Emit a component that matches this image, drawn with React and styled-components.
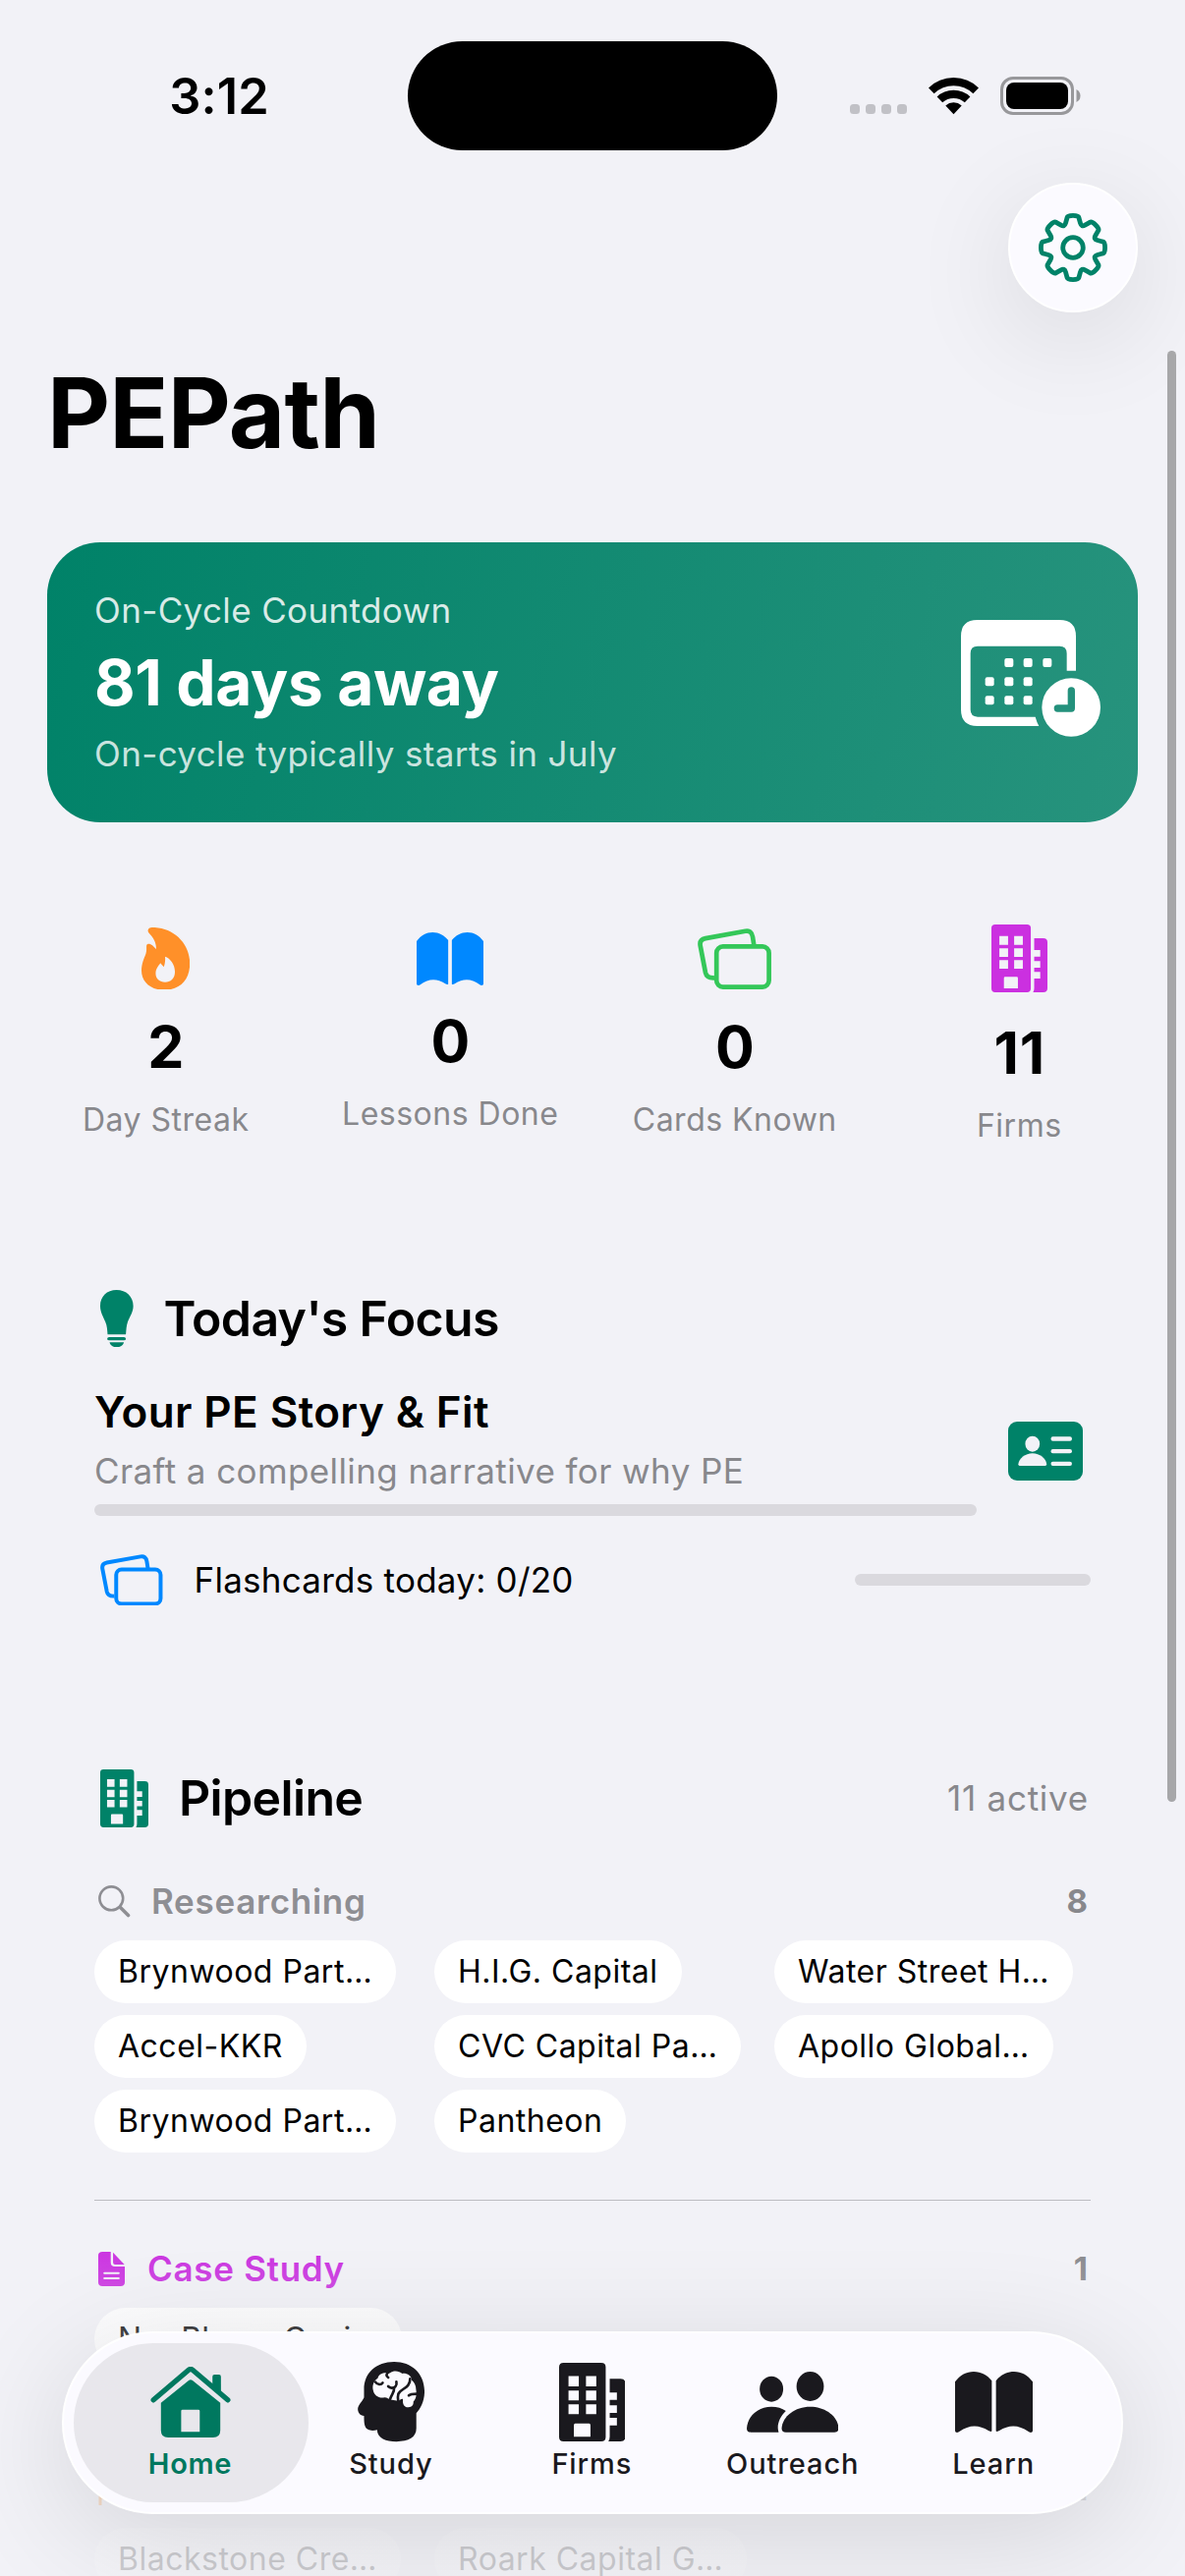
import React from 'react';
import styled, { createGlobalStyle } from 'styled-components';

const brand = '#008268';
const grey = '#88888c';
const pageBg = '#f2f2f7';

const GlobalStyle = createGlobalStyle`
  * {
    box-sizing: border-box;
  }
  body {
    margin: 0;
    background: ${pageBg};
    font-family: Inter, "Liberation Sans", sans-serif;
    color: #000;
  }
  svg {
    display: block;
    flex: none;
  }
`;

const Screen = styled.div`
  position: relative;
  width: 1206px;
  height: 2622px;
  overflow: hidden;
  background: ${pageBg};
`;

const StatusBar = styled.div`
  display: grid;
  grid-template-columns: 415px 376px 1fr;
  align-items: center;
  height: 153px;
  padding-top: 42px;
`;

const Clock = styled.div`
  padding-left: 31px;
  text-align: center;
  font-size: 50.5px;
  font-weight: 600;
  letter-spacing: 0.1px;
`;

const Island = styled.div`
  height: 111px;
  border-radius: 56px;
  background: #000;
`;

const Signals = styled.div`
  display: flex;
  align-items: center;
  gap: 22px;
  padding-left: 74px;
`;

const Dots = styled.div`
  display: flex;
  gap: 6px;
  margin-top: 27px;

  i {
    width: 10px;
    height: 10px;
    border-radius: 3.5px;
    background: #c1c1c6;
  }
`;

const Toolbar = styled.div`
  display: flex;
  justify-content: flex-end;
  padding: 33px 48px 0;
`;

const RoundButton = styled.button`
  display: flex;
  align-items: center;
  justify-content: center;
  width: 132px;
  height: 132px;
  padding: 0;
  border: 2px solid #fff;
  border-radius: 50%;
  background: #fbfaff;
  box-shadow: 0 24px 110px rgba(0, 0, 0, 0.11);
`;

const Title = styled.h1`
  margin: 42px 0 0 48px;
  font-size: 99px;
  line-height: 120px;
  font-weight: 700;
  letter-spacing: -0.8px;
`;

const Countdown = styled.section`
  display: flex;
  align-items: center;
  justify-content: space-between;
  height: 285px;
  margin: 72px 48px 0;
  padding: 0 38px 0 48px;
  border-radius: 54px;
  background: linear-gradient(104.4deg, #008268, #27937d);
  color: #fff;
`;

const CountdownText = styled.div`
  padding-bottom: 2px;
`;

const CountdownIcon = styled.div`
  padding-bottom: 8px;
`;

const CountdownNote = styled.p`
  margin: 0;
  font-size: 35px;
  line-height: 48px;
  letter-spacing: 0.37px;
  color: rgba(255, 255, 255, ${props => props.$alpha});
`;

const CountdownDays = styled.p`
  margin: 11px 0 9px;
  font-size: 64px;
  line-height: 78px;
  font-weight: 700;
  letter-spacing: -0.4px;
`;

const Stats = styled.section`
  display: grid;
  grid-template-columns: repeat(4, 1fr);
  gap: 48px;
  align-items: center;
  height: 240px;
  margin: 93px 48px 0;
`;

const Stat = styled.div`
  display: flex;
  flex-direction: column;
  align-items: center;
`;

const StatIcon = styled.div`
  display: flex;
  align-items: center;
  height: ${props => props.$height}px;
`;

const StatValue = styled.div`
  margin: 20px 0 18px;
  padding-left: 1px;
  font-size: 59px;
  line-height: 72px;
  font-weight: 700;
  letter-spacing: 0.8px;
`;

const StatLabel = styled.div`
  font-size: 32px;
  line-height: 39px;
  letter-spacing: 0.5px;
  white-space: nowrap;
  color: ${grey};
`;

const Section = styled.section`
  margin: ${props => props.$top}px 96px 0;
`;

const SectionHead = styled.div`
  display: flex;
  align-items: center;
  gap: 31px;
  height: 60px;
  padding: 0 2px 0 6px;
`;

const SectionTitle = styled.h2`
  flex: 1;
  margin: 0;
  font-size: 50px;
  line-height: 60px;
  font-weight: 600;
  letter-spacing: -0.65px;
`;

const Note = styled.div`
  font-size: 35px;
  line-height: 44px;
  letter-spacing: 0.4px;
  color: ${grey};
`;

const ActiveCount = styled(Note)`
  letter-spacing: 0.75px;
`;

const Lesson = styled.div`
  display: flex;
  align-items: center;
  justify-content: space-between;
  margin-top: 38px;
  padding-right: 8px;
`;

const LessonText = styled.div`
  width: 898px;
`;

const LessonTitle = styled.h3`
  margin: 0 0 11px;
  font-size: 44px;
  line-height: 54px;
  font-weight: 600;
  letter-spacing: 0.4px;
`;

const Track = styled.div`
  width: ${props => props.$width || '100%'};
  height: 12px;
  border-radius: 6px;
  background: #dad9de;
`;

const LessonTrack = styled(Track)`
  margin-top: 12px;
`;

const Flashcards = styled.div`
  display: flex;
  align-items: center;
  gap: 32px;
  height: 54px;
  margin-top: 38px;
  padding-left: 6px;
`;

const FlashcardsLabel = styled.div`
  flex: 1;
  font-size: 35px;
  line-height: 54px;
  letter-spacing: 0.25px;
`;

const Stage = styled.div`
  margin-top: ${props => props.$top}px;
`;

const StageHead = styled.div`
  display: flex;
  align-items: center;
  justify-content: space-between;
  height: 44px;
  padding: 0 3px 0 4px;
  margin-bottom: 18px;
`;

const StageName = styled.div`
  display: flex;
  align-items: center;
  gap: ${props => props.$gap || 23}px;
  font-size: 35px;
  line-height: 44px;
  font-weight: 600;
  letter-spacing: 0.7px;
  color: ${props => props.$color};
`;

const StageCount = styled.div`
  font-size: 33px;
  font-weight: 700;
  color: ${grey};
`;

const Chips = styled.div`
  display: grid;
  grid-template-columns: repeat(3, 322px);
  justify-items: start;
  gap: 12px 24px;
`;

const Chip = styled.div`
  height: 64px;
  padding: 0 24px;
  border-radius: 32px;
  background: #fff;
  font-size: 32px;
  line-height: 63px;
  letter-spacing: ${props => (props.$tight ? 0 : 0.5)}px;
  white-space: nowrap;
`;

const Divider = styled.div`
  height: 1px;
  margin: 48px 0 47px;
  background: #bdbdc1;
`;

const ScrollThumb = styled.div`
  position: absolute;
  top: 357px;
  right: 9px;
  width: 9px;
  height: 1477px;
  border-radius: 5px;
  background: #a7a7a9;
`;

const Fade = styled.div`
  position: absolute;
  left: 0;
  right: 0;
  bottom: 0;
  height: 340px;
  background: linear-gradient(rgba(242, 242, 247, 0), rgba(242, 242, 247, 0.25) 25%, rgba(242, 242, 247, 0.84) 85%);
`;

const TabBar = styled.nav`
  position: absolute;
  left: 63px;
  bottom: 63px;
  display: flex;
  width: 1080px;
  height: 186px;
  padding: 10px;
  border: 2px solid #fff;
  border-radius: 93px;
  background: #fbfaff;
  box-shadow: 0 24px 120px rgba(0, 0, 0, 0.12);
`;

const Tab = styled.a`
  display: flex;
  flex: none;
  flex-direction: column;
  align-items: center;
  width: 239px;
  height: 162px;
  padding-right: 2px;
  border-radius: 81px;
  background: ${props => (props.$active ? '#e8e7ec' : 'none')};
  color: ${props => (props.$active ? '#00785f' : '#1a191e')};

  & + & {
    margin-left: -34.6px;
  }
`;

const TabIcon = styled.div`
  display: flex;
  align-items: center;
  height: 82px;
  margin-top: 19px;
`;

const TabLabel = styled.span`
  margin-top: 4px;
  font-size: 29px;
  line-height: 36px;
  font-weight: ${props => (props.$active ? 600 : 500)};
  letter-spacing: ${props => (props.$active ? 0.7 : 0.9)}px;
`;

/* ---------- icons ---------- */

const Wifi = () => (
  <svg width="51" height="38" viewBox="0 0 51 38">
    <path d="M0 10.5 Q10.5 0 25.5 0 Q40.5 0 51 10.5 L45.4 16.3 Q37 8.3 25.5 8.3 Q14 8.3 5.6 16.3Z" />
    <path d="M8.6 19.4 Q15.6 12.7 25.5 12.7 Q35.4 12.7 42.4 19.4 L36.8 25.2 Q32 20.9 25.5 20.9 Q19 20.9 14.2 25.2Z" />
    <path d="M17.3 28.4 Q20.8 25.3 25.5 25.3 Q30.2 25.3 33.7 28.4 L25.5 37.2Z" />
  </svg>
);

const Battery = () => (
  <svg width="83" height="39" viewBox="0 0 83 39">
    <rect x="1.5" y="1.5" width="72" height="36" rx="11.5" fill="none" stroke="#98989b" strokeWidth="3" />
    <rect x="6" y="6" width="63" height="27" rx="8" />
    <path d="M77.5 13 Q81.5 15 81.5 19.5 Q81.5 24 77.5 26Z" fill="#98989b" />
  </svg>
);

// eight rounded teeth, smoothed through the midpoints
const gearPath = () => {
  const pts = [];
  for (let k = 0; k < 8; k++) {
    [[-12.5, 29.5], [-9.5, 33], [9.5, 33], [12.5, 29.5], [22.5, 22.5]].forEach(([off, r]) => {
      const a = ((k * 45 + off - 90) * Math.PI) / 180;
      pts.push([35 + r * Math.cos(a), 35 + r * Math.sin(a)]);
    });
  }
  const mid = (p, q) => [(p[0] + q[0]) / 2, (p[1] + q[1]) / 2];
  const start = mid(pts[pts.length - 1], pts[0]);
  return pts.reduce((d, p, i) => {
    const m = mid(p, pts[(i + 1) % pts.length]);
    return d + ` Q${p[0].toFixed(2)} ${p[1].toFixed(2)} ${m[0].toFixed(2)} ${m[1].toFixed(2)}`;
  }, `M${start[0].toFixed(2)} ${start[1].toFixed(2)}`) + 'Z';
};

const Gear = () => (
  <svg width="70" height="70" viewBox="0 0 70 70" fill="none" stroke={brand} strokeWidth="4.8" strokeLinejoin="round">
    <path d={gearPath()} />
    <circle cx="35" cy="35" r="10.3" />
  </svg>
);

const CalendarClock = () => (
  <svg width="142" height="119" viewBox="834 303 426 357" fill="#fff">
    <path d="M884 303H1135Q1185 303 1185 353V458H1157V405Q1157 383 1135 383H885Q863 383 863 405V577Q863 599 885 599H1061Q1065 614 1072 627H884Q834 627 834 577V353Q834 303 884 303Z" />
    {[[967, 420], [1025, 420], [1084, 420], [908, 478], [967, 478], [1025, 478], [908, 535], [967, 535], [1025, 535]].map(([x, y]) => (
      <rect key={x + '-' + y} x={x} y={y} width="27" height="27" rx="6" />
    ))}
    <circle cx="1170.5" cy="570" r="89.5" />
    <path d="M1171 519V573H1129" fill="none" stroke="#24917c" strokeWidth="22" strokeLinecap="round" strokeLinejoin="round" />
  </svg>
);

const Flame = () => (
  <svg width="49.2" height="63.7" viewBox="281 130 133 191" preserveAspectRatio="none" fill="#ff9029">
    <path
      fillRule="evenodd"
      d="M300 135C303 130 312 129 318 130C372 134 414 180 414 240C414 290 388 321 343 321C305 321 281 295 281 262C281 240 288 225 293 210C296 200 294 190 295 185C297 178 306 180 311 185C316 190 319 193 321 197C323 180 315 163 304 150C298 143 298 139 300 135ZM346 219C360 224 373 243 373 265C373 287 361 297 346 297C331 297 320 286 320 270C320 257 327 248 333 239C337 244 340 247 342 251C345 243 347 232 346 219Z"
    />
  </svg>
);

const Book = ({ width = 68, height = 54, color = 'currentColor' }) => (
  <svg width={width} height={height} viewBox="1038 144 184 162" preserveAspectRatio="none" fill={color}>
    <path d="M1038 171C1050 153 1065 144 1082 144C1100 144 1114 153 1125 168V302C1123 304 1120 303 1117 301C1106 293 1095 289 1084 289C1072 289 1060 294 1049 303C1045 307 1038 307 1038 301Z" />
    <path d="M1222 171C1210 153 1195 144 1178 144C1160 144 1146 153 1135 168V302C1137 304 1140 303 1143 301C1154 293 1165 289 1176 289C1188 289 1200 294 1211 303C1215 307 1222 307 1222 301Z" />
  </svg>
);

const Cards = ({ width = 75, height = 62, color }) => (
  <svg width={width} height={height} viewBox="0 0 75 62" fill="none" stroke={color} strokeWidth="4.7">
    <path d="M57.3 17L56 8.5Q54.8 1.6 48.5 2.8L8 10.1Q1.6 11.4 2.7 17.5L8 45Q9.3 50.8 17 50.3" />
    <rect x="19.2" y="18.4" width="53.4" height="41.2" rx="6.5" />
  </svg>
);

const Building = ({ width = 57, height = 69, color = 'currentColor' }) => (
  <svg width={width} height={height} viewBox="1058 123 148 207" preserveAspectRatio="none" fill={color}>
    <path
      fillRule="evenodd"
      d="M1068 123h84q10 0 10 11v185q0 11-10 11h-84q-10 0-10-11v-185q0-11 10-11zM1079 158v27h23v-27zM1118 158v27h23v-27zM1079 196v26h23v-26zM1118 196v26h23v-26zM1079 232v26h23v-26zM1118 232v26h23v-26zM1094 283q-3 0-3 4v31h37v-31q0-4-3-4z"
    />
    <path d="M1171 165H1195q11 0 11 12V318q0 12-11 12H1168Q1171 325 1171 318V288h16v-20h-16v-13h16v-20h-16v-14h16v-20h-16z" />
  </svg>
);

const Bulb = () => (
  <svg width="33.6" height="58.3" viewBox="106 98 85 175" preserveAspectRatio="none" fill={brand}>
    <path d="M148 98C173 98 191 118 191 147C191 166 183 178 177 195C173 207 173 222 172 234H125C124 222 124 207 119 195C113 178 106 166 106 147C106 118 123 98 148 98Z" />
    <rect x="124" y="242" width="48" height="10" rx="5" />
    <path d="M130 258H167C165 268 158 273 148 273C139 273 132 268 130 258Z" />
  </svg>
);

const IdCard = () => (
  <svg width="76" height="60" viewBox="1031 198 227 180" preserveAspectRatio="none" fill={pageBg}>
    <rect x="1031" y="198" width="227" height="180" rx="27" fill={brand} />
    <ellipse cx="1105" cy="266" rx="22" ry="24" />
    <path d="M1066 333Q1062 333 1062 328C1064 310 1083 295 1105 295C1127 295 1146 310 1148 328Q1148 333 1144 333Z" />
    <rect x="1161" y="244" width="64" height="13" rx="6" />
    <rect x="1161" y="282" width="64" height="13" rx="6" />
    <rect x="1161" y="320" width="64" height="13" rx="6" />
  </svg>
);

const Magnifier = () => (
  <svg width="33" height="33" viewBox="0 0 33 33" fill="none" stroke="#8e8e93" strokeLinecap="round">
    <circle cx="13.3" cy="13.3" r="11.9" strokeWidth="2.6" />
    <path d="M22.5 22.5L30.5 30.5" strokeWidth="3.6" />
  </svg>
);

const Doc = () => (
  <svg width="27" height="35" viewBox="152 246 68 105" preserveAspectRatio="none" fill="#ca30e0">
    <path d="M163 246H184V278Q184 291 195 291H220V340Q220 351 209 351H163Q152 351 152 340V257Q152 246 163 246Z" />
    <path d="M190 248L219 285H195Q190 285 190 279Z" />
    <path d="M168 311H204M168 327H204" stroke={pageBg} strokeWidth="6" strokeLinecap="round" />
  </svg>
);

const Bubble = () => (
  <svg width="34" height="34" viewBox="0 0 34 34" fill="none" stroke="#ff8d28" strokeWidth="3">
    <path d="M2 34V6Q2 2 6 2H28Q32 2 32 6V22Q32 26 28 26H2" />
  </svg>
);

const House = () => (
  <svg width="82" height="72" viewBox="188 221 246 217" fill="currentColor">
    <path d="M197 323L305 231Q311 226 317 231L425 323" fill="none" stroke="currentColor" strokeWidth="16" strokeLinecap="round" />
    <path d="M378 275V251Q378 245 384 245H398Q404 245 404 251V300Z" />
    <path
      fillRule="evenodd"
      d="M311 261Q314 261 317 263L402 332V416Q402 438 380 438H242Q220 438 220 416V332L305 263Q308 261 311 261ZM286 353Q282 353 282 357V421H339V357Q339 353 335 353Z"
    />
  </svg>
);

const HeadBrain = () => (
  <svg width="68.5" height="81.5" viewBox="819 206 205 245" fill="currentColor">
    <path d="M930 206C985 206 1023 243 1023 297C1023 325 1012 348 998 363V410C998 437 975 450 937 450C905 450 879 440 878 414C868 417 857 417 850 413C839 406 838 394 838 371C826 371 819 360 819 350C820 338 833 327 838 315V290C838 240 875 206 930 206Z" />
    <path
      fill="#fbfaff"
      d="M912 241C902 237 883 242 880 256C868 262 862 280 866 293C868 308 885 319 900 315C908 314 913 320 919 322L938 325C945 330 950 317 957 320C955 336 962 345 972 345C984 346 990 338 989 328C999 318 999 302 997 290C997 278 992 268 984 262C983 248 968 240 955 242C945 232 926 232 918 240Z"
    />
    <g fill="none" stroke="currentColor" strokeWidth="8" strokeLinecap="round">
      <path d="M914 236C905 243 905 250 912 254" />
      <path d="M873 268C879 277 891 277 895 270" />
      <path d="M937 267C940 280 931 286 923 286C917 285 914 282 912 281" />
      <path d="M930 286C931 300 923 303 917 322" />
      <path d="M979 258C980 286 950 288 943 304C940 313 941 320 943 329" />
      <path d="M999 304C990 304 979 305 975 309" />
    </g>
  </svg>
);

const People = () => (
  <svg width="93.5" height="62" viewBox="413 612 242 186" preserveAspectRatio="none" fill="currentColor">
    <ellipse cx="478" cy="665" rx="31" ry="39" />
    <ellipse cx="580" cy="657" rx="36" ry="45" />
    <path d="M424 797Q413 797 413 785C415 748 442 719 478 719C493 719 506 723 516 732C502 748 495 766 495 783Q495 791 497 797Z" />
    <path d="M516 797Q505 797 505 785C507 748 540 719 580 719C620 719 653 748 655 785Q655 797 644 797Z" />
  </svg>
);

/* ---------- data ---------- */

const stats = [
  { label: 'Day Streak', value: 2, height: 68, icon: <Flame /> },
  { label: 'Lessons Done', value: 0, height: 56, icon: <Book color="#0088ff" /> },
  { label: 'Cards Known', value: 0, height: 68, icon: <Cards color="#34c759" /> },
  { label: 'Firms', value: 11, height: 80, icon: <Building color="#cb30e0" /> },
];

const researching = [
  'Brynwood Part…',
  'H.I.G. Capital',
  'Water Street H…',
  'Accel-KKR',
  'CVC Capital Pa…',
  'Apollo Global…',
  'Brynwood Part…',
  'Pantheon',
];

const tabs = [
  { label: 'Home', icon: <House /> },
  { label: 'Study', icon: <HeadBrain /> },
  { label: 'Firms', icon: <Building width={67.5} height={80} /> },
  { label: 'Outreach', icon: <People /> },
  { label: 'Learn', icon: <Book width={79} height={62} /> },
];

const PipelineStage = ({ name, color, icon, count, firms, top, gap, tight }) => (
  <Stage $top={top}>
    <StageHead>
      <StageName $color={color} $gap={gap}>
        {icon}
        {name}
      </StageName>
      <StageCount>{count}</StageCount>
    </StageHead>
    <Chips>
      {firms.map((firm, i) => (
        <Chip key={i} $tight={tight}>{firm}</Chip>
      ))}
    </Chips>
  </Stage>
);

export default function App() {
  return (
    <Screen>
      <GlobalStyle />

      <StatusBar>
        <Clock>3:12</Clock>
        <Island />
        <Signals>
          <Dots><i /><i /><i /><i /></Dots>
          <Wifi />
          <Battery />
        </Signals>
      </StatusBar>

      <Toolbar>
        <RoundButton aria-label="Settings"><Gear /></RoundButton>
      </Toolbar>

      <Title>PEPath</Title>

      <Countdown>
        <CountdownText>
          <CountdownNote $alpha={0.85}>On-Cycle Countdown</CountdownNote>
          <CountdownDays>81 days away</CountdownDays>
          <CountdownNote $alpha={0.8}>On-cycle typically starts in July</CountdownNote>
        </CountdownText>
        <CountdownIcon><CalendarClock /></CountdownIcon>
      </Countdown>

      <Stats>
        {stats.map(stat => (
          <Stat key={stat.label}>
            <StatIcon $height={stat.height}>{stat.icon}</StatIcon>
            <StatValue>{stat.value}</StatValue>
            <StatLabel>{stat.label}</StatLabel>
          </Stat>
        ))}
      </Stats>

      <Section $top={142}>
        <SectionHead>
          <Bulb />
          <SectionTitle>Today's Focus</SectionTitle>
        </SectionHead>
        <Lesson>
          <LessonText>
            <LessonTitle>Your PE Story &amp; Fit</LessonTitle>
            <Note>Craft a compelling narrative for why PE</Note>
            <LessonTrack />
          </LessonText>
          <IdCard />
        </Lesson>
        <Flashcards>
          <Cards width={63.5} height={52.5} color="#0088ff" />
          <FlashcardsLabel>Flashcards today: 0/20</FlashcardsLabel>
          <Track $width="240px" />
        </Flashcards>
      </Section>

      <Section $top={165}>
        <SectionHead>
          <Building width={49} height={59} color={brand} />
          <SectionTitle>Pipeline</SectionTitle>
          <ActiveCount>11 active</ActiveCount>
        </SectionHead>
        <PipelineStage top={53} gap={21} name="Researching" color="#8e8e93" icon={<Magnifier />} count={8} firms={researching} />
        <Divider />
        <PipelineStage top={0} name="Case Study" color="#ca30e0" icon={<Doc />} count={1} firms={['Nor Bloom Capi…']} tight />
        <Divider />
        <PipelineStage top={49} color="#ff8d28" icon={<Bubble />} count={2} firms={['Blackstone Cre…', 'Roark Capital G…']} />
      </Section>

      <ScrollThumb />
      <Fade />

      <TabBar>
        {tabs.map((tab, i) => (
          <Tab key={tab.label} $active={i === 0}>
            <TabIcon>{tab.icon}</TabIcon>
            <TabLabel $active={i === 0}>{tab.label}</TabLabel>
          </Tab>
        ))}
      </TabBar>
    </Screen>
  );
}
